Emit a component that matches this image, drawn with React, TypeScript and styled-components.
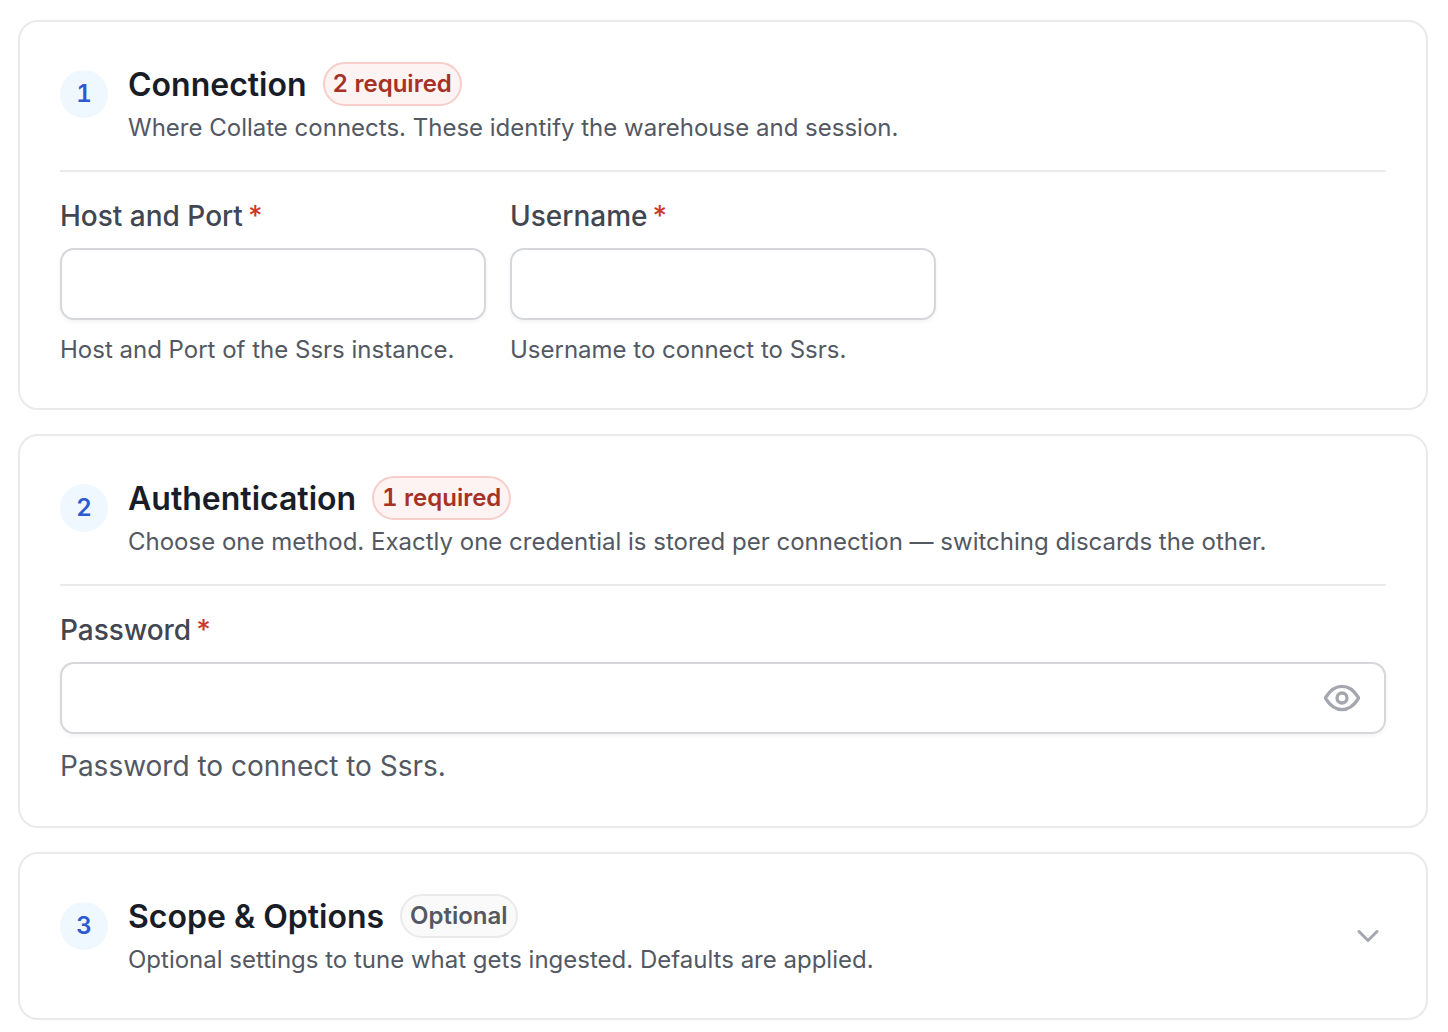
import React, { useState } from 'react';
import styled, { createGlobalStyle } from 'styled-components';

const GlobalStyle = createGlobalStyle`
  *, *::before, *::after { box-sizing: border-box; }
  body {
    margin: 0;
    background: #ffffff;
    font-family: Inter, "Liberation Sans", sans-serif;
  }
`;

const Page = styled.main`
  display: flex;
  flex-direction: column;
  gap: 24px;
  padding: 20px 20px 12px 18px;
`;

const Card = styled.section`
  padding: 40px;
  border: 2px solid #e9eaeb;
  border-radius: 20px;
  background: #ffffff;
`;

const Header = styled.header<{ $divided?: boolean }>`
  display: flex;
  align-items: flex-start;
  gap: 20px;
  padding-bottom: ${(p) => (p.$divided ? '24px' : '0')};
  border-bottom: ${(p) => (p.$divided ? '2px solid #e9eaeb' : '0')};
`;

const Step = styled.span`
  display: flex;
  flex: none;
  align-items: center;
  justify-content: center;
  width: 48px;
  height: 48px;
  margin-top: 8px;
  border-radius: 50%;
  background: #f0f8ff;
  color: #2e59d1;
  font-size: 24px;
  font-weight: 600;
  font-variant-numeric: tabular-nums;
  line-height: 36px;
`;

const Heading = styled.div`
  flex: 1;
  min-width: 0;
`;

const TitleRow = styled.div`
  display: flex;
  align-items: flex-start;
  gap: 16px;
`;

const Title = styled.h2`
  margin: 0;
  color: #181d27;
  font-size: 32px;
  font-weight: 600;
  line-height: 46px;
`;

const Badge = styled.span<{ $required?: boolean }>`
  padding: 2px 8px;
  border: 2px solid ${(p) => (p.$required ? '#f6cdc9' : '#e9eaeb')};
  border-radius: 22px;
  background: ${(p) => (p.$required ? '#fdf3f2' : '#fafafa')};
  color: ${(p) => (p.$required ? '#a63225' : '#535862')};
  font-size: 24px;
  font-weight: 600;
  font-variant-numeric: tabular-nums;
  line-height: 36px;
`;

const Description = styled.p`
  margin: 2px 0 0;
  color: #535862;
  font-size: 24px;
  line-height: 36px;
`;

const Fields = styled.div<{ $columns: number }>`
  display: grid;
  grid-template-columns: repeat(${(p) => p.$columns}, minmax(0, 1fr));
  gap: 24px;
  padding-top: 24px;
`;

const Field = styled.div`
  display: flex;
  flex-direction: column;
`;

const Label = styled.label`
  display: flex;
  gap: 5px;
  color: #414651;
  font-size: 28px;
  font-weight: 500;
  line-height: 40px;
`;

const Asterisk = styled.span`
  color: #cb3b2d;
`;

const InputBox = styled.div`
  display: flex;
  align-items: center;
  height: 72px;
  margin-top: 12px;
  border: 2px solid #d5d7da;
  border-radius: 14px;
  background: #ffffff;
  box-shadow: 0 2px 4px rgba(10, 13, 18, 0.05);
`;

const Input = styled.input`
  flex: 1;
  min-width: 0;
  height: 100%;
  padding: 0 24px;
  border: 0;
  outline: 0;
  background: transparent;
  color: #181d27;
  font: inherit;
  font-size: 28px;
`;

const IconButton = styled.button`
  display: flex;
  flex: none;
  padding: 0;
  border: 0;
  background: none;
  color: #a4a7ae;
  cursor: pointer;
`;

const RevealButton = styled(IconButton)`
  margin-right: 22px;
`;

const ExpandButton = styled(IconButton)`
  align-self: center;
`;

const Hint = styled.p<{ $large?: boolean }>`
  margin: 12px 0 0;
  color: #535862;
  font-size: ${(p) => (p.$large ? '28px' : '24px')};
  line-height: ${(p) => (p.$large ? '40px' : '36px')};
`;

type SectionProps = {
  step: number;
  title: string;
  badge: string;
  required?: boolean;
  description: string;
  action?: React.ReactNode;
  children?: React.ReactNode;
};

function Section({ step, title, badge, required, description, action, children }: SectionProps) {
  return (
    <Card>
      <Header $divided={Boolean(children)}>
        <Step>{step}</Step>
        <Heading>
          <TitleRow>
            <Title>{title}</Title>
            <Badge $required={required}>{badge}</Badge>
          </TitleRow>
          <Description>{description}</Description>
        </Heading>
        {action}
      </Header>
      {children}
    </Card>
  );
}

type TextFieldProps = {
  id: string;
  label: string;
  hint: string;
  largeHint?: boolean;
  type?: string;
  action?: React.ReactNode;
};

function TextField({ id, label, hint, largeHint, type = 'text', action }: TextFieldProps) {
  return (
    <Field>
      <Label htmlFor={id}>
        {label}
        <Asterisk>*</Asterisk>
      </Label>
      <InputBox>
        <Input id={id} type={type} required aria-describedby={`${id}-hint`} />
        {action}
      </InputBox>
      <Hint id={`${id}-hint`} $large={largeHint}>{hint}</Hint>
    </Field>
  );
}

export default function App() {
  const [visible, setVisible] = useState(false);
  const [expanded, setExpanded] = useState(false);

  return (
    <>
      <GlobalStyle />
      <Page>
        <Section
          step={1}
          title="Connection"
          badge="2 required"
          required
          description="Where Collate connects. These identify the warehouse and session."
        >
          <Fields $columns={3}>
            <TextField id="host" label="Host and Port" hint="Host and Port of the Ssrs instance." />
            <TextField id="username" label="Username" hint="Username to connect to Ssrs." />
          </Fields>
        </Section>
        <Section
          step={2}
          title="Authentication"
          badge="1 required"
          required
          description="Choose one method. Exactly one credential is stored per connection — switching discards the other."
        >
          <Fields $columns={1}>
            <TextField
              id="password"
              label="Password"
              hint="Password to connect to Ssrs."
              largeHint
              type={visible ? 'text' : 'password'}
              action={
                <RevealButton
                  type="button"
                  aria-label={visible ? 'Hide password' : 'Show password'}
                  onClick={() => setVisible(!visible)}
                >
                  <svg width="40" height="40" viewBox="0 0 24 24" fill="none" stroke="currentColor" strokeWidth="2" strokeLinecap="round" strokeLinejoin="round" aria-hidden="true">
                    <path d="M2.42 12.713c-.136-.215-.204-.323-.242-.49a1.173 1.173 0 0 1 0-.446c.038-.167.106-.274.242-.49C3.546 9.505 6.895 5 12 5s8.455 4.505 9.58 6.287c.137.215.205.323.243.49.029.125.029.322 0 .446-.038.167-.106.274-.242.49C20.455 14.495 17.105 19 12 19c-5.106 0-8.455-4.505-9.58-6.287Z" />
                    <circle cx="12" cy="12" r="3" />
                  </svg>
                </RevealButton>
              }
            />
          </Fields>
        </Section>
        <Section
          step={3}
          title="Scope & Options"
          badge="Optional"
          description="Optional settings to tune what gets ingested. Defaults are applied."
          action={
            <ExpandButton
              type="button"
              aria-label="Toggle scope and options"
              aria-expanded={expanded}
              onClick={() => setExpanded(!expanded)}
            >
              <svg width="36" height="36" viewBox="0 0 24 24" fill="none" stroke="currentColor" strokeWidth="2" strokeLinecap="round" strokeLinejoin="round" aria-hidden="true">
                <path d="m6 9 6 6 6-6" />
              </svg>
            </ExpandButton>
          }
        />
      </Page>
    </>
  );
}
